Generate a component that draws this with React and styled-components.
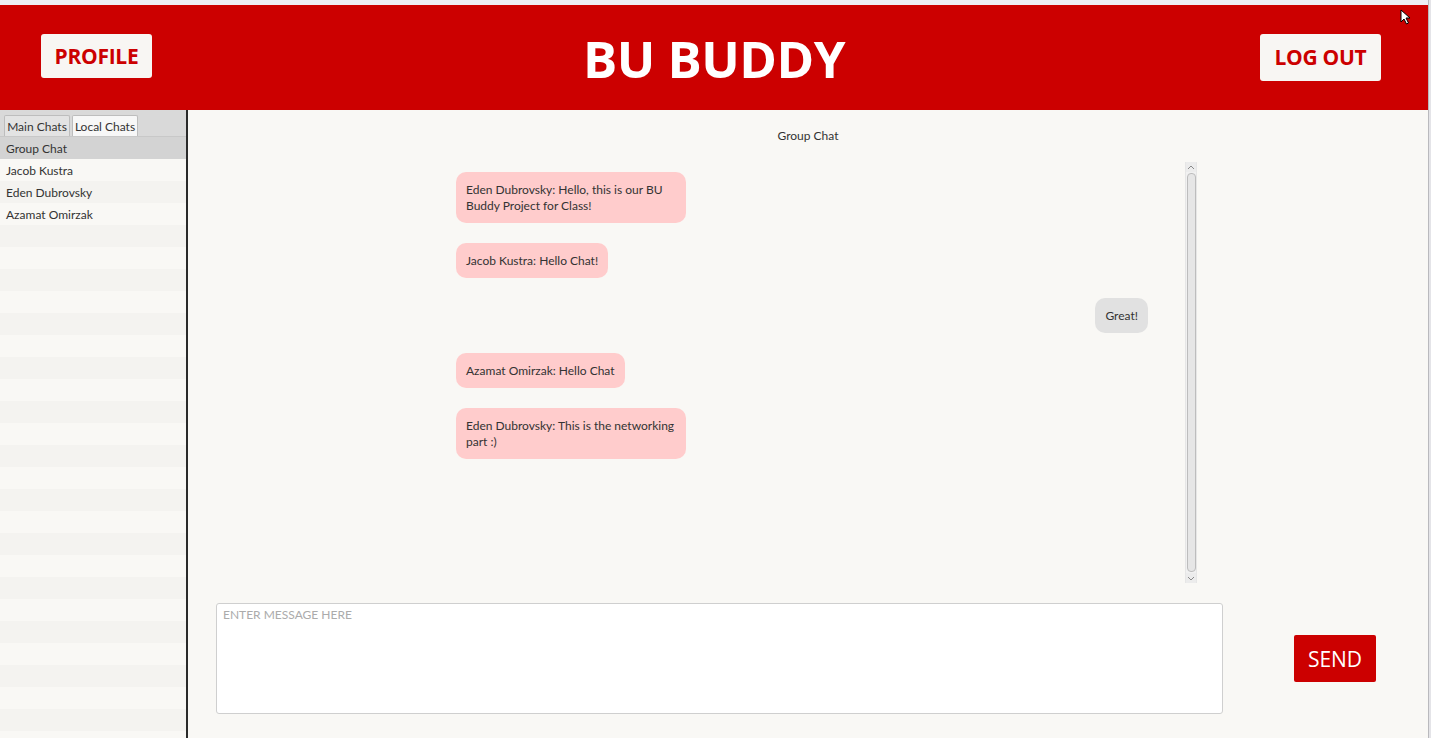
import React from 'react';
import styled, { createGlobalStyle } from 'styled-components';

const GlobalStyle = createGlobalStyle`
  html, body {
    margin: 0;
    padding: 0;
    background: #f9f8f5;
  }
  body {
    font-family: Lato, "Open Sans", Arial, sans-serif;
    overflow: hidden;
  }
  * {
    box-sizing: border-box;
  }
`;

const RED = '#cc0000';

const Screen = styled.div`
  width: 1431px;
  height: 738px;
  display: flex;
  overflow: hidden;
`;

const Window = styled.div`
  width: 1428px;
  display: flex;
  flex-direction: column;
  background: #f9f8f5;
`;

const EdgeStrip = styled.div`
  width: 3px;
  background: #e4e4e8;
  border-left: 1px solid #b9b9bd;
`;

const TitleStrip = styled.div`
  height: 5px;
  flex-shrink: 0;
  background: #eeeef4;
`;

const Header = styled.header`
  height: 105px;
  flex-shrink: 0;
  background: ${RED};
  display: flex;
  align-items: center;
  justify-content: space-between;
  padding: 0 47px 0 41px;
  position: relative;
`;

const HeaderButton = styled.button`
  width: ${p => p.$w}px;
  height: ${p => p.$h}px;
  margin-top: ${p => p.$top || 0}px;
  border: none;
  border-radius: 3px;
  background: #f8f6f3;
  color: ${RED};
  font-family: "Open Sans", "Noto Sans", sans-serif;
  font-weight: 700;
  font-size: 21px;
  letter-spacing: -0.3px;
  padding: 0;
  display: flex;
  align-items: center;
  justify-content: center;
`;

const Title = styled.h1`
  position: absolute;
  left: 0;
  right: 0;
  top: 0;
  bottom: 0;
  margin: 0;
  display: flex;
  align-items: center;
  justify-content: center;
  color: #ffffff;
  font-family: "Open Sans", "Noto Sans", sans-serif;
  font-weight: 700;
  font-size: 51px;
  letter-spacing: -0.5px;
  pointer-events: none;
  padding-top: 1px;
`;

const Cursor = styled.svg`
  position: absolute;
  top: 4px;
  right: 16px;
`;

const Body = styled.div`
  flex: 1;
  display: flex;
  min-height: 0;
`;

const Sidebar = styled.aside`
  width: 188px;
  border-right: 2px solid #2a2a2a;
  display: flex;
  flex-direction: column;
  background: #f9f8f5;
  overflow: hidden;
`;

const TabBar = styled.div`
  height: 27px;
  flex-shrink: 0;
  background: #d9d9d9;
  display: flex;
  align-items: flex-end;
  gap: 2px;
  padding-left: 4px;
  border-bottom: 1px solid #c8c8c8;
`;

const Tab = styled.div`
  height: 21px;
  width: 66px;
  font-size: 12px;
  color: #333;
  display: flex;
  align-items: center;
  justify-content: center;
  background: ${p => (p.$active ? '#f7f7f7' : '#e3e3e3')};
  border: 1px solid #bdbdbd;
  border-bottom: none;
  border-radius: 2px 2px 0 0;
  white-space: nowrap;
`;

const ChatList = styled.div`
  flex: 1;
  display: flex;
  flex-direction: column;
`;

const ChatRow = styled.div`
  height: 22px;
  flex-shrink: 0;
  padding-left: 6px;
  font-size: 12px;
  color: #333;
  display: flex;
  align-items: center;
  background: ${p => (p.$selected ? '#d3d3d3' : p.$odd ? '#f4f3f0' : '#f9f8f5')};
`;

const Main = styled.main`
  flex: 1;
  display: flex;
  flex-direction: column;
  align-items: stretch;
`;

const ChatTitle = styled.div`
  height: 52px;
  flex-shrink: 0;
  padding-top: 18px;
  text-align: center;
  font-size: 12px;
  color: #333;
`;

const ConversationRow = styled.div`
  display: flex;
  justify-content: center;
`;

const Conversation = styled.div`
  width: 778px;
  height: 421px;
  display: flex;
`;

const Messages = styled.div`
  flex: 1;
  display: flex;
  flex-direction: column;
  gap: 20px;
  padding: 10px 37px 0 37px;
`;

const Bubble = styled.div`
  align-self: ${p => (p.$mine ? 'flex-end' : 'flex-start')};
  max-width: 230px;
  padding: 10px 10px 9px;
  border-radius: 10px;
  background: ${p => (p.$mine ? '#e1e1e1' : '#ffcccc')};
  color: #333;
  font-size: 12px;
  line-height: 16px;
`;

const ScrollBar = styled.div`
  width: 12px;
  display: flex;
  flex-direction: column;
  align-items: center;
  background: #f1f1f1;
  border-left: 1px solid #e6e6e6;
  border-right: 1px solid #e6e6e6;
`;

const ScrollArrow = styled.div`
  height: 10px;
  width: 100%;
  display: flex;
  align-items: center;
  justify-content: center;
  background: #ececec;
`;

const ScrollThumb = styled.div`
  flex: 1;
  width: 9px;
  margin: 1px 0;
  border: 1px solid #bdbdbd;
  border-radius: 4px;
  background: #e6e6e6;
`;

const Composer = styled.div`
  display: flex;
  align-items: flex-start;
  padding: 20px 0 0 28px;
`;

const MessageBox = styled.textarea`
  width: 1007px;
  height: 111px;
  resize: none;
  border: 1px solid #cfcfcf;
  border-radius: 3px;
  background: #ffffff;
  padding: 3px 6px;
  font-family: Lato, "Open Sans", sans-serif;
  font-size: 12px;
  color: #333;
  outline: none;
  &::placeholder {
    color: #ababab;
  }
`;

const SendButton = styled.button`
  margin: 32px 0 0 71px;
  width: 82px;
  height: 47px;
  border: none;
  border-radius: 2px;
  background: ${RED};
  color: #ffffff;
  font-family: "Open Sans", "Noto Sans", sans-serif;
  font-size: 21px;
  padding: 0;
`;

const Arrow = ({ down }) => (
  <svg width="8" height="5" viewBox="0 0 8 5">
    <path
      d={down ? 'M1 1 L4 4 L7 1' : 'M1 4 L4 1 L7 4'}
      fill="none"
      stroke="#8a8a8a"
      strokeWidth="1"
    />
  </svg>
);

const chats = ['Group Chat', 'Jacob Kustra', 'Eden Dubrovsky', 'Azamat Omirzak'];

const messages = [
  { text: 'Eden Dubrovsky: Hello, this is our BU Buddy Project for Class!' },
  { text: 'Jacob Kustra: Hello Chat!' },
  { text: 'Great!', mine: true },
  { text: 'Azamat Omirzak: Hello Chat' },
  { text: 'Eden Dubrovsky: This is the networking part :)' },
];

export default function App() {
  const rows = Array.from({ length: 28 }, (_, i) => chats[i] || '');

  return (
    <Screen>
      <GlobalStyle />
      <Window>
        <TitleStrip />
        <Header>
          <HeaderButton $w={111} $h={44} $top={-4}>PROFILE</HeaderButton>
          <Title>BU BUDDY</Title>
          <HeaderButton $w={121} $h={47} $top={-1}>LOG OUT</HeaderButton>
          <Cursor width="12" height="16" viewBox="0 0 12 16">
            <path d="M1 1 L1 13 L4 10 L6.5 15 L8.5 14 L6 9 L10 9 Z" fill="#fff" stroke="#000" strokeWidth="1" />
          </Cursor>
        </Header>
        <Body>
          <Sidebar>
            <TabBar>
              <Tab>Main Chats</Tab>
              <Tab $active>Local Chats</Tab>
            </TabBar>
            <ChatList>
              {rows.map((name, i) => (
                <ChatRow key={i} $selected={i === 0} $odd={i % 2 === 0}>
                  {name}
                </ChatRow>
              ))}
            </ChatList>
          </Sidebar>
          <Main>
            <ChatTitle>Group Chat</ChatTitle>
            <ConversationRow>
              <Conversation>
                <Messages>
                  {messages.map((m, i) => (
                    <Bubble key={i} $mine={m.mine}>
                      {m.text}
                    </Bubble>
                  ))}
                </Messages>
                <ScrollBar>
                  <ScrollArrow>
                    <Arrow />
                  </ScrollArrow>
                  <ScrollThumb />
                  <ScrollArrow>
                    <Arrow down />
                  </ScrollArrow>
                </ScrollBar>
              </Conversation>
            </ConversationRow>
            <Composer>
              <MessageBox placeholder="ENTER MESSAGE HERE" />
              <SendButton>SEND</SendButton>
            </Composer>
          </Main>
        </Body>
      </Window>
      <EdgeStrip />
    </Screen>
  );
}
